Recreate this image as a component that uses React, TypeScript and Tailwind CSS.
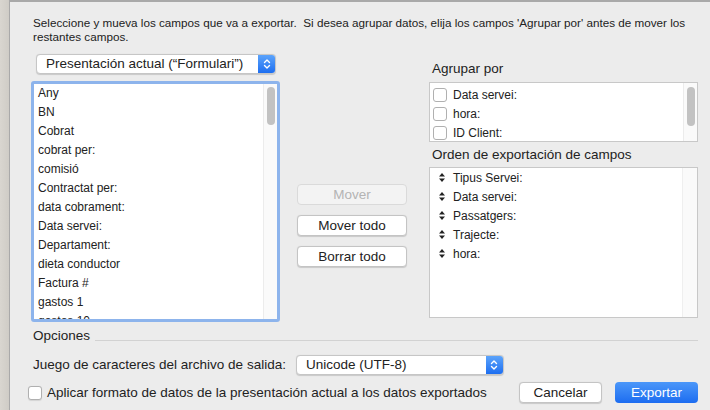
import React from 'react';

const fields = [
    "Any", "BN", "Cobrat", "cobrat per:", "comisió", "Contractat per:", "data cobrament:",
    "Data servei:", "Departament:", "dieta conductor", "Factura #", "gastos 1", "gastos 10",
];
const groupFields = ["Data servei:", "hora:", "ID Client:"];
const orderFields = ["Tipus Servei:", "Data servei:", "Passatgers:", "Trajecte:", "hora:"];

const Chevrons = () => (
    <svg width="8" height="12" viewBox="0 0 8 12" fill="none" stroke="white" strokeWidth="1.4" strokeLinecap="round" strokeLinejoin="round">
        <path d="M1.5 4.5 L4 2 L6.5 4.5"/>
        <path d="M1.5 7.5 L4 10 L6.5 7.5"/>
    </svg>
);

const Popup = ({label, width}: {label: string, width: string}) => (
    <div className={`${width} h-[20px] shrink-0 flex rounded-[4px] bg-white border border-[#c6c6c6] shadow-[0_0.5px_1px_rgba(0,0,0,0.15)] overflow-hidden`}>
        <div className="flex-1 pl-[9px] text-[13.5px] leading-[18px] text-[#222] whitespace-nowrap">{label}</div>
        <div className="w-[17px] flex items-center justify-center bg-gradient-to-b from-[#5ba3fb] to-[#1d6ef0]">
            <Chevrons/>
        </div>
    </div>
);

const SortHandle = () => (
    <svg width="6" height="9" viewBox="0 0 6 9" fill="#222">
        <path d="M3 0 L6 3.5 L0 3.5 Z"/>
        <path d="M3 9 L6 5.5 L0 5.5 Z"/>
    </svg>
);

const Button = ({children, disabled}: {children: React.ReactNode, disabled?: boolean}) => (
    <div className={`w-[110px] h-[21px] rounded-[4px] border text-center text-[13.5px] leading-[19px] ${disabled ? "bg-[#f3f3f3] border-[#dadada] text-[#b4b4b4]" : "bg-white border-[#c4c4c4] text-[#222] shadow-[0_0.5px_1px_rgba(0,0,0,0.15)]"}`}>
        {children}
    </div>
);

export default function App() {
    return (
        <div className="w-[710px] h-[410px] flex overflow-hidden bg-[#d6d3cd]" style={{fontFamily: '"Liberation Sans", Arial, sans-serif'}}>
            <div className="w-[9px] shrink-0 bg-gradient-to-r from-[#d9d6d0] to-[#cfccc6]"/>
            <div className="flex-1 min-w-0 bg-[#ececec] border-l border-t-2 border-[#a9a9a9] pl-[23px] pr-[12px] text-[#222]">
                <div className="pt-[14px] text-[11.7px] leading-[14px] w-[665px]">
                    Seleccione y mueva los campos que va a exportar.&nbsp; Si desea agrupar datos, elija los campos 'Agrupar por' antes de mover los restantes campos.
                </div>

                <div className="flex mt-[10px]">
                    {/* left column */}
                    <div className="w-[249px] shrink-0 -ml-[2px] flex flex-col">
                        <div className="pl-[5px]">
                            <Popup label={"Presentación actual (“Formulari”)"} width="w-[240px]"/>
                        </div>
                        <div className="mt-[7px] h-[241px] rounded-[3px] border-[3px] border-[#8db4ec] bg-white flex overflow-hidden">
                            <div className="flex-1 pl-[4px] text-[12px]">
                                {fields.map((f) => (
                                    <div key={f} className="h-[19px] leading-[19px]">{f}</div>
                                ))}
                            </div>
                            <div className="w-[14px] border-l border-[#ececec] bg-[#fafafa] pt-[3px] flex justify-center">
                                <div className="w-[8px] h-[38px] rounded-full bg-[#c2c2c2]"/>
                            </div>
                        </div>
                    </div>

                    {/* middle buttons */}
                    <div className="ml-[17px] shrink-0 pt-[130px] flex flex-col gap-[10px]">
                        <Button disabled>Mover</Button>
                        <Button>Mover todo</Button>
                        <Button>Borrar todo</Button>
                    </div>

                    {/* right column */}
                    <div className="ml-[22px] shrink-0 w-[269px] pt-[7px]">
                        <div className="pl-[3px] text-[13.5px] leading-[16px]">Agrupar por</div>
                        <div className="mt-[5px] h-[60px] border border-[#c8c8c8] bg-white flex">
                            <div className="flex-1 pl-[3px] pt-[2px] text-[12px]">
                                {groupFields.map((f) => (
                                    <div key={f} className="h-[19px] flex items-center gap-[6px]">
                                        <div className="w-[14px] h-[14px] rounded-[3px] border border-[#b0b0b0] bg-white"/>
                                        <span>{f}</span>
                                    </div>
                                ))}
                            </div>
                            <div className="w-[14px] border-l border-[#ececec] bg-[#fafafa] pt-[4px] flex justify-center">
                                <div className="w-[8px] h-[39px] rounded-full bg-[#c2c2c2]"/>
                            </div>
                        </div>
                        <div className="mt-[5px] pl-[3px] text-[13.5px] leading-[16px]">Orden de exportación de campos</div>
                        <div className="mt-[4px] h-[151px] border border-[#c8c8c8] bg-white flex">
                            <div className="flex-1 pl-[9px] text-[12px]">
                                {orderFields.map((f) => (
                                    <div key={f} className="h-[19px] flex items-center gap-[8px]">
                                        <SortHandle/>
                                        <span>{f}</span>
                                    </div>
                                ))}
                            </div>
                            <div className="w-[15px] border-l border-[#efefef] bg-[#fafafa]"/>
                        </div>
                    </div>
                </div>

                {/* options */}
                <div className="mt-[6px] flex items-center gap-[5px]">
                    <span className="text-[13.5px] leading-[16px]">Opciones</span>
                    <div className="flex-1 h-px bg-[#d2d2d2] mt-[8px]"/>
                </div>
                <div className="mt-[11px] flex items-center gap-[10px]">
                    <span className="text-[13.5px] whitespace-nowrap">Juego de caracteres del archivo de salida:</span>
                    <Popup label="Unicode (UTF-8)" width="w-[208px]"/>
                </div>
                <div className="mt-[7px] -ml-[5px] flex items-center">
                    <div className="w-[14px] h-[14px] shrink-0 rounded-[3px] border border-[#b0b0b0] bg-white shadow-[0_0.5px_1px_rgba(0,0,0,0.1)]"/>
                    <span className="ml-[5px] text-[13.5px] whitespace-nowrap">Aplicar formato de datos de la presentación actual a los datos exportados</span>
                    <div className="ml-auto flex gap-[13px]">
                        <div className="w-[83px] h-[21px] rounded-[4px] bg-white border border-[#c4c4c4] shadow-[0_0.5px_1px_rgba(0,0,0,0.15)] text-center text-[13.5px] leading-[19px]">Cancelar</div>
                        <div className="w-[83px] h-[21px] rounded-[4px] bg-gradient-to-b from-[#4b97f9] to-[#1c6cf0] text-white text-center text-[13.5px] leading-[21px]">Exportar</div>
                    </div>
                </div>
            </div>
        </div>
    );
}
